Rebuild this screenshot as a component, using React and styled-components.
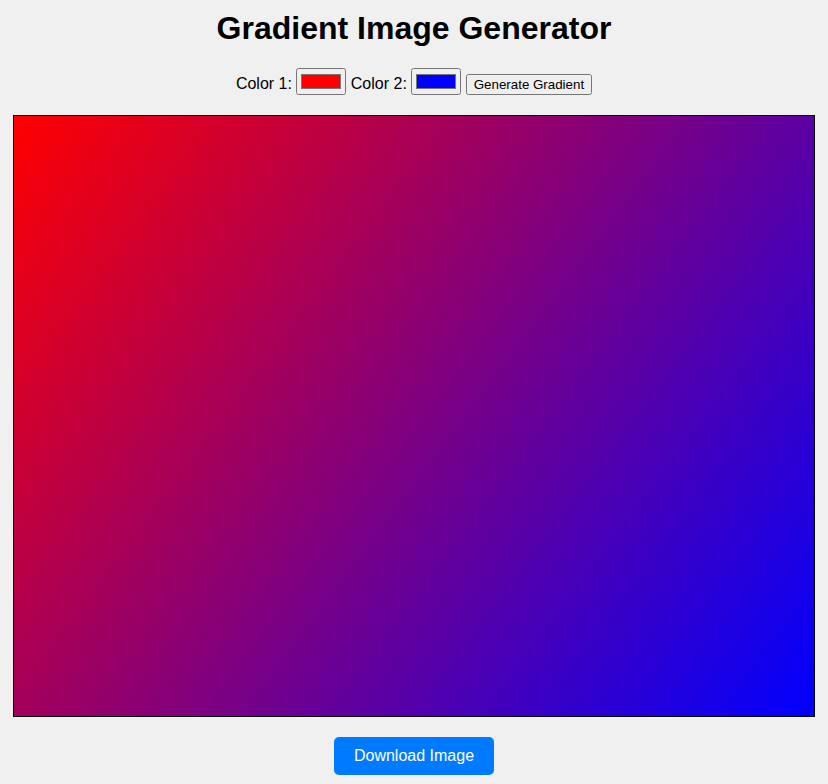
import React, { useEffect, useRef, useState } from 'react'
import styled, { createGlobalStyle } from 'styled-components'

const GlobalStyle = createGlobalStyle`
  body {
    margin: 0;
    background: #f0f0f0;
    font-family: "Liberation Sans", Arial, sans-serif;
  }
`

const Page = styled.div`
  text-align: center;
  padding-top: 10px;
`

const Title = styled.h1`
  font-size: 32px;
  font-weight: 700;
  margin: 0 0 21px;
  color: #000;
`

const Controls = styled.div`
  font-size: 16px;
  color: #000;
  margin-bottom: 20px;
`

const ColorInput = styled.input`
  width: 50px;
  height: 27px;
  margin: 0;
`

const GenerateButton = styled.button`
  font-family: "Liberation Sans", Arial, sans-serif;
  font-size: 13.33px;
  margin: 0;
`

const Canvas = styled.canvas`
  display: block;
  margin: 0 auto;
  border: 1px solid #000;
`

const DownloadButton = styled.button`
  margin-top: 20px;
  padding: 10px 20px;
  font-family: "Liberation Sans", Arial, sans-serif;
  font-size: 16px;
  color: #fff;
  background: #007bff;
  border: none;
  border-radius: 5px;
  cursor: pointer;
`

export default function App() {
  const [color1, setColor1] = useState('#ff0000')
  const [color2, setColor2] = useState('#0000ff')
  const canvasRef = useRef(null)

  const draw = () => {
    const ctx = canvasRef.current.getContext('2d')
    const grad = ctx.createLinearGradient(0, 0, 800, 600)
    grad.addColorStop(0, color1)
    grad.addColorStop(1, color2)
    ctx.fillStyle = grad
    ctx.fillRect(0, 0, 800, 600)
  }

  useEffect(() => {
    draw()
  }, [])

  return (
    <Page>
      <GlobalStyle />
      <Title>Gradient Image Generator</Title>
      <Controls>
        <label>
          Color 1: <ColorInput type='color' value={color1} onChange={e => setColor1(e.target.value)} />
        </label>{' '}
        <label>
          Color 2: <ColorInput type='color' value={color2} onChange={e => setColor2(e.target.value)} />
        </label>{' '}
        <GenerateButton onClick={draw}>Generate Gradient</GenerateButton>
      </Controls>
      <Canvas ref={canvasRef} width={800} height={600} />
      <DownloadButton>Download Image</DownloadButton>
    </Page>
  )
}
